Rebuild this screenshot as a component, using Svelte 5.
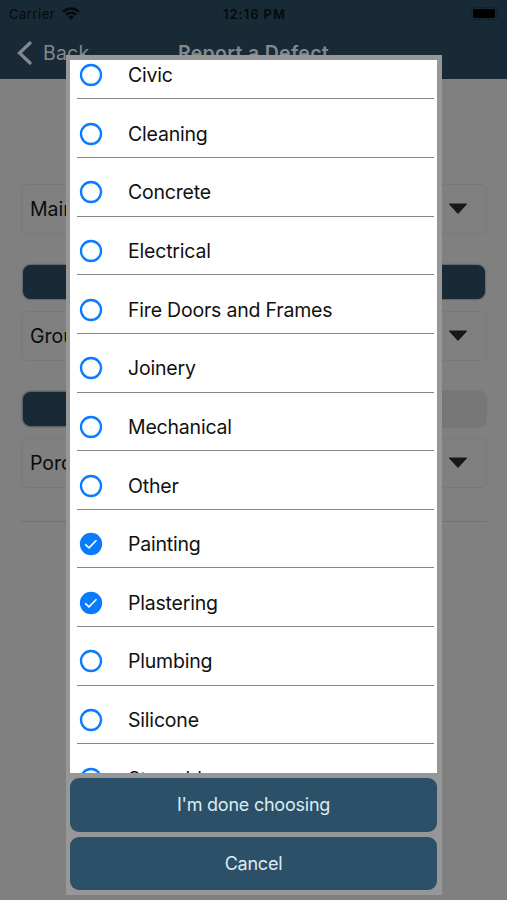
<script lang="ts">
  let trades = $state([
    { name: 'Civic', checked: false },
    { name: 'Cleaning', checked: false },
    { name: 'Concrete', checked: false },
    { name: 'Electrical', checked: false },
    { name: 'Fire Doors and Frames', checked: false },
    { name: 'Joinery', checked: false },
    { name: 'Mechanical', checked: false },
    { name: 'Other', checked: false },
    { name: 'Painting', checked: true },
    { name: 'Plastering', checked: true },
    { name: 'Plumbing', checked: false },
    { name: 'Silicone', checked: false },
    { name: 'Stone blue', checked: false },
  ]);
  let open = $state(true);
</script>

{#snippet select(label: string)}
  <div class="select">
    <span>{label}</span>
    <svg width="20" height="12" viewBox="0 0 20 12">
      <path d="M1.3 1h17.4L10 10.5z" stroke-linejoin="round" />
    </svg>
  </div>
{/snippet}

<main>
  <header>
    <div class="status">
      <div class="carrier">
        <span>Carrier</span>
        <svg width="18" height="13" viewBox="0 0 18 13">
          <path class="arc" d="M1.2 4.8a11 11 0 0 1 15.6 0M4 7.9a7 7 0 0 1 10 0" />
          <path d="M9 12.8 6.1 9.9a4.1 4.1 0 0 1 5.8 0z" />
        </svg>
      </div>
      <div class="time">12:16 PM</div>
      <div class="battery">
        <svg width="30" height="14" viewBox="0 0 30 14">
          <rect class="shell" x="1" y=".5" width="26" height="12" rx="3" />
          <rect x="3" y="2" width="22" height="9" rx="1.5" />
          <path class="tip" d="M28 4.5q2 2 0 4z" />
        </svg>
      </div>
    </div>
    <nav>
      <div class="back">
        <svg width="16" height="24" viewBox="0 0 16 24">
          <path d="M13 2 2.5 12 13 22" />
        </svg>
        <span>Back</span>
      </div>
      <h1>Report a Defect</h1>
    </nav>
  </header>

  <section class="form">
    {@render select('Main Building')}
    <div class="bar full"></div>
    {@render select('Ground Floor')}
    <div class="toggle"><div class="bar"></div></div>
    {@render select('Porch')}
    <hr />
  </section>
</main>

{#if open}
  <div class="overlay">
    <div class="sheet">
      <div class="list">
        <div class="rows">
          {#each trades as trade}
            <button class="row" onclick={() => (trade.checked = !trade.checked)}>
              <svg class:checked={trade.checked} width="24" height="24" viewBox="0 0 24 24">
                <circle cx="12" cy="12" r="10" />
                {#if trade.checked}
                  <path d="m6.2 12.4 3.8 3.5 7.5-7.6" />
                {/if}
              </svg>
              <span>{trade.name}</span>
            </button>
          {/each}
        </div>
      </div>
      <button class="action" onclick={() => (open = false)}>I'm done choosing</button>
      <button class="action" onclick={() => (open = false)}>Cancel</button>
    </div>
  </div>
{/if}

<style>
  :global(body) {
    background: #808080;
    font-family: Inter, Roboto, sans-serif;
    overflow: hidden;
  }
  * {
    box-sizing: border-box;
  }
  main {
    height: 900px;
    background: #808080;
  }
  svg {
    display: block;
    flex: none;
  }
  button {
    border: 0;
    margin: 0;
    font: inherit;
  }

  header {
    height: 79px;
    background: #172a36;
  }
  .status {
    display: grid;
    grid-template-columns: 1fr auto 1fr;
    align-items: center;
    height: 27px;
    padding: 0 7px 0 9px;
    font-size: 13px;
    color: #050a0d;
  }
  .carrier {
    display: flex;
    align-items: center;
    gap: 7px;
    letter-spacing: 0.5px;
  }
  .carrier svg {
    fill: #050a0d;
  }
  .carrier .arc {
    fill: none;
    stroke: #050a0d;
    stroke-width: 2.4;
  }
  .time {
    font-weight: 600;
    letter-spacing: 0.95px;
  }
  .battery {
    justify-self: end;
  }
  .battery rect {
    fill: #000;
  }
  .battery .shell {
    fill: none;
    stroke: #13222c;
  }
  .battery .tip {
    fill: #101d25;
  }
  nav {
    display: grid;
    grid-template-columns: 1fr auto 1fr;
    align-items: center;
    height: 51px;
    padding: 0 17px;
    color: #82898e;
  }
  .back {
    display: flex;
    align-items: center;
    gap: 10px;
    font-size: 19.5px;
    letter-spacing: 0.2px;
  }
  .back svg {
    fill: none;
    stroke: #82898e;
    stroke-width: 3.2;
    stroke-linecap: round;
  }
  h1 {
    margin: 0;
    font-size: 19.5px;
    font-weight: 600;
    letter-spacing: 0.3px;
  }

  .form {
    display: flex;
    flex-direction: column;
    padding: 105px 20px 0 21px;
  }
  .select {
    display: flex;
    align-items: center;
    justify-content: space-between;
    height: 50px;
    padding: 0 18px 0 8px;
    border: 1px solid #797979;
    border-radius: 6px;
    font-size: 19.5px;
    color: #0b0b0b;
  }
  .select svg {
    fill: #16191b;
    stroke: #16191b;
  }
  .bar {
    width: 230px;
    height: 34px;
    border-radius: 8px;
    background: #172a36;
    box-shadow: 0 0 2px #172a36;
  }
  .full {
    width: auto;
    margin: 31px 2px 12px;
  }
  .toggle {
    height: 38px;
    margin: 29px 0 10px;
    padding: 2px;
    border-radius: 9px;
    background: #777;
  }
  hr {
    width: 100%;
    height: 1px;
    margin: 33px 0 0;
    border: 0;
    background: #727272;
  }

  .overlay {
    position: absolute;
    inset: 0;
    display: flex;
    justify-content: center;
    align-items: flex-start;
    padding-top: 55px;
  }
  .sheet {
    display: flex;
    flex-direction: column;
    gap: 5px;
    width: 376px;
    height: 840px;
    padding: 5px 4.5px;
    background: #979797;
  }
  .list {
    flex: 1;
    overflow: hidden;
    background: #fff;
  }
  .rows {
    margin-top: -19.2px;
    padding: 0 3.5px 0 6.5px;
  }
  .row {
    display: flex;
    align-items: center;
    gap: 25px;
    width: 100%;
    height: 58.64px;
    padding: 11px 0 0 2.5px;
    border-bottom: 1.4px solid #7f8a8f;
    background: none;
    font-size: 19.5px;
    letter-spacing: -0.2px;
    color: #111;
    text-align: left;
  }
  .row circle {
    fill: none;
    stroke: #0a7aff;
    stroke-width: 2.3;
  }
  .row .checked circle {
    fill: #0a7aff;
  }
  .row path {
    fill: none;
    stroke: #fff;
    stroke-width: 1.6;
  }
  .action {
    height: 53.5px;
    border-radius: 9px;
    background: #2b5067;
    font-size: 18px;
    letter-spacing: -0.23px;
    color: #dcebf5;
  }
</style>
